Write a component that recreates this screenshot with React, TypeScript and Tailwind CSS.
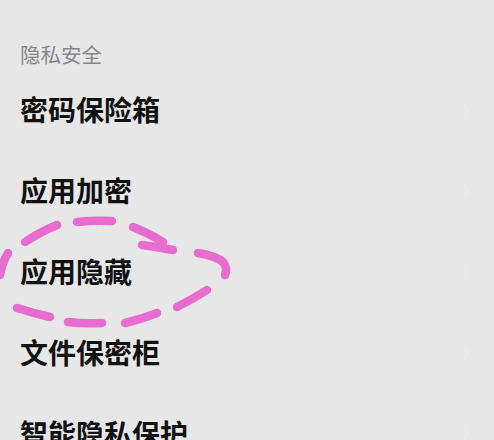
import React from "react";

const items = ["密码保险箱", "应用加密", "应用隐藏", "文件保密柜", "智能隐私保护"];

const dashes = [
  "M25 242 Q40 232 57 225",
  "M77 222 Q95 220 112 221",
  "M133 227 Q150 234 163 242",
  "M142 245 Q158 247 173 250",
  "M198 253 Q216 256 223 262 Q228 268 225 275",
  "M207 290 Q193 299 177 307",
  "M157 313 Q142 319 125 323",
  "M102 323 Q85 324 68 322",
  "M50 317 Q33 313 17 308",
  "M8 253 Q2 263 0 275",
];

export default function App() {
  return (
    <div
      className="relative w-[494px] h-[440px] overflow-hidden bg-[#e7e7e7]"
      style={{ fontFamily: '"Noto Sans CJK SC", "Noto Sans", sans-serif' }}
    >
      <div className="pl-[20px] pt-[39px]">
        <div className="h-[30px] flex items-center text-[20.5px] leading-[30px] text-[#85858c]">
          隐私安全
        </div>
        {items.map((t) => (
          <div key={t} className="h-[81px] flex items-center justify-between pr-[24px]">
            <span className="text-[28px] font-semibold text-[#111111] leading-none -mt-[2px]">{t}</span>
            <svg width="10" height="18" viewBox="0 0 10 18" className="opacity-20">
              <path d="M2 2 L8 9 L2 16" fill="none" stroke="#f6f6f6" strokeWidth="2" />
            </svg>
          </div>
        ))}
      </div>
      <svg
        className="absolute left-0 top-0 pointer-events-none"
        width="494"
        height="440"
        viewBox="0 0 494 440"
      >
        {dashes.map((d, i) => (
          <path
            key={i}
            d={d}
            fill="none"
            stroke="#e86bd0"
            strokeWidth="8.5"
            strokeLinecap="round"
            strokeLinejoin="round"
          />
        ))}
      </svg>
    </div>
  );
}
